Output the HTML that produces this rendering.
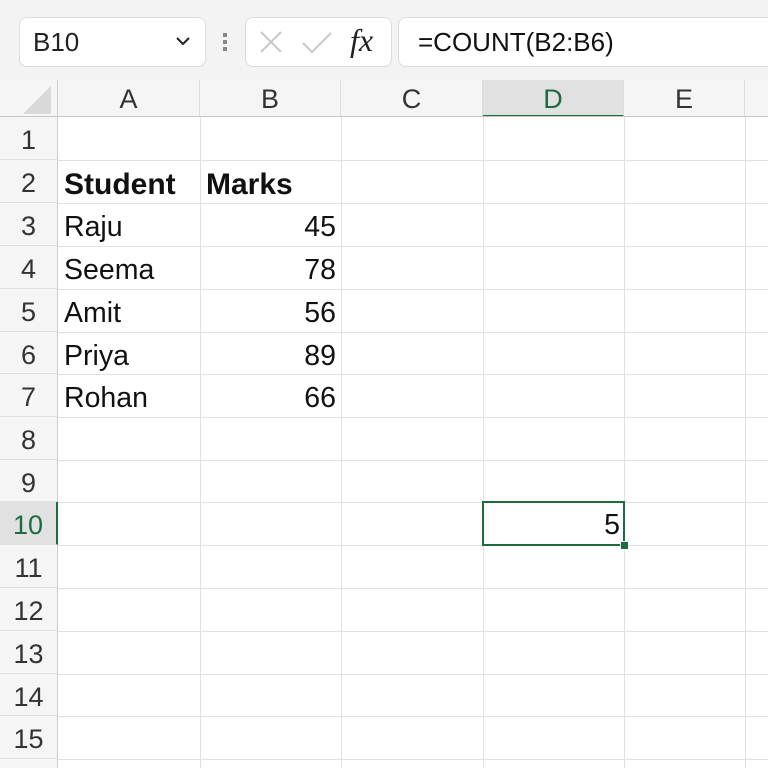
<!DOCTYPE html>
<html><head><style>
html,body{margin:0;width:768px;height:768px;overflow:hidden}
body{background:#fff;font-family:"Liberation Sans",sans-serif;position:relative}
.a{position:absolute}
.top{left:0;top:0;width:768px;height:80px;background:#f3f3f3}
.box{background:#fff;border:1px solid #dcdcdc;border-radius:8px}
.vl{position:absolute;top:117px;width:1px;height:651px;background:#e1e1e1}
.hl{position:absolute;left:58px;width:710px;height:1px;background:#e1e1e1}
.rh{position:absolute;left:0;width:57px;background:#f5f5f5;text-align:center;font-size:27px;color:#333;border-bottom:1px solid #e1e1e1;box-sizing:border-box;line-height:46px}
.ch{position:absolute;top:80px;height:37px;background:#f5f5f5;text-align:center;font-size:27px;color:#333;line-height:38px;border-right:1px solid #dcdcdc;box-sizing:border-box}
.t{position:absolute;font-size:28.5px;color:#111;line-height:45px}
</style></head><body>
<div class="a top"></div>
<div class="a box" style="left:19px;top:17px;width:185px;height:48px"></div>
<div class="a" style="left:33px;top:27px;font-size:26px;color:#222">B10</div>
<svg class="a" style="left:175px;top:36px" width="16" height="10"><path d="M2 2 L8 8 L14 2" fill="none" stroke="#222" stroke-width="2"/></svg>
<div class="a" style="left:223px;top:33px;width:4px;height:4px;background:#888"></div>
<div class="a" style="left:223px;top:40px;width:4px;height:4px;background:#888"></div>
<div class="a" style="left:223px;top:47px;width:4px;height:4px;background:#888"></div>
<div class="a box" style="left:245px;top:17px;width:145px;height:48px"></div>
<svg class="a" style="left:260px;top:31px" width="80" height="24"><path d="M1 1 L21 21 M21 1 L1 21" stroke="#c8c8c8" stroke-width="2"/><path d="M43 12 L52 21 L71 2" fill="none" stroke="#c8c8c8" stroke-width="2"/></svg>
<div class="a" style="left:350px;top:22px;font-family:'Liberation Serif',serif;font-style:italic;font-size:32px;color:#222">fx</div>
<div class="a box" style="left:398px;top:17px;width:380px;height:48px"></div>
<div class="a" style="left:418px;top:27px;font-size:26px;color:#111">=COUNT(B2:B6)</div>

<div class="a" style="left:0;top:80px;width:768px;height:37px;background:#f5f5f5"></div>
<svg class="a" style="left:22px;top:85px" width="30" height="30"><path d="M29 1 L29 29 L1 29 Z" fill="#d9d9d9"/></svg>
<div class="a" style="left:57px;top:80px;width:1px;height:688px;background:#cfcfcf"></div>
<div class="ch" style="left:58px;width:142px">A</div>
<div class="ch" style="left:200px;width:141px">B</div>
<div class="ch" style="left:341px;width:142px">C</div>
<div class="ch" style="left:483px;width:141px;background:#e1e1e1;color:#1e6b40;border-bottom:2px solid #1e6b40">D</div>
<div class="ch" style="left:624px;width:121px">E</div>
<div class="a" style="left:0;top:116px;width:768px;height:1px;background:#c6c6c6"></div>

<div class="vl" style="left:200px"></div><div class="vl" style="left:341px"></div><div class="vl" style="left:483px"></div><div class="vl" style="left:624px"></div><div class="vl" style="left:745px"></div>

<div class="hl" style="top:160px"></div><div class="hl" style="top:203px"></div><div class="hl" style="top:246px"></div><div class="hl" style="top:289px"></div><div class="hl" style="top:332px"></div><div class="hl" style="top:374px"></div><div class="hl" style="top:417px"></div><div class="hl" style="top:460px"></div><div class="hl" style="top:502px"></div><div class="hl" style="top:545px"></div><div class="hl" style="top:588px"></div><div class="hl" style="top:631px"></div><div class="hl" style="top:674px"></div><div class="hl" style="top:716px"></div><div class="hl" style="top:759px"></div>

<div class="rh" style="top:117px;height:43px">1</div>
<div class="rh" style="top:160px;height:43px">2</div>
<div class="rh" style="top:203px;height:43px">3</div>
<div class="rh" style="top:246px;height:43px">4</div>
<div class="rh" style="top:289px;height:43px">5</div>
<div class="rh" style="top:332px;height:42px">6</div>
<div class="rh" style="top:374px;height:43px">7</div>
<div class="rh" style="top:417px;height:43px">8</div>
<div class="rh" style="top:460px;height:42px">9</div>
<div class="rh" style="top:502px;height:43px;background:#e1e1e1;color:#1e6b40;border-right:2px solid #1e6b40;width:58px">10</div>
<div class="rh" style="top:545px;height:43px">11</div>
<div class="rh" style="top:588px;height:43px">12</div>
<div class="rh" style="top:631px;height:43px">13</div>
<div class="rh" style="top:674px;height:42px">14</div>
<div class="rh" style="top:716px;height:43px">15</div>
<div class="rh" style="top:759px;height:43px">16</div>

<div class="t" style="left:64px;top:162px;font-weight:bold;font-size:30px">Student</div>
<div class="t" style="left:206px;top:162px;font-weight:bold;font-size:30px">Marks</div>
<div class="t" style="left:64px;top:205px">Raju</div>
<div class="t" style="left:64px;top:248px">Seema</div>
<div class="t" style="left:64px;top:291px">Amit</div>
<div class="t" style="left:64px;top:334px">Priya</div>
<div class="t" style="left:64px;top:376px">Rohan</div>
<div class="t" style="right:432px;top:205px">45</div>
<div class="t" style="right:432px;top:248px">78</div>
<div class="t" style="right:432px;top:291px">56</div>
<div class="t" style="right:432px;top:334px">89</div>
<div class="t" style="right:432px;top:376px">66</div>

<div class="a" style="left:482px;top:501px;width:139px;height:41px;border:2px solid #1e6b40"></div>
<div class="a" style="left:620px;top:541px;width:7px;height:7px;background:#1e6b40;border:1px solid #fff"></div>
<div class="t" style="right:148px;top:503px">5</div>
</body></html>
